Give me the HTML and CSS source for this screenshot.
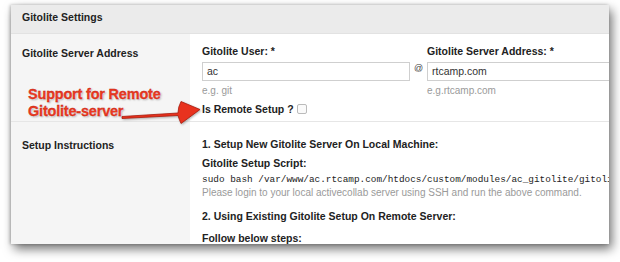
FILE: index.html
```html
<!DOCTYPE html>
<html>
<head>
<meta charset="utf-8">
<link rel="stylesheet" href="styles.css">
</head>
<body>
<div class="panel">
  <div class="panel-head">Gitolite Settings</div>
  <div class="row row-first">
    <div class="label">Gitolite Server Address</div>
    <div class="content">
      <div class="fields">
        <div class="field field-user">
          <div class="flabel">Gitolite User: *</div>
          <div class="input">ac</div>
          <div class="hint">e.g. git</div>
        </div>
        <div class="at">@</div>
        <div class="field field-server">
          <div class="flabel">Gitolite Server Address: *</div>
          <div class="input">rtcamp.com</div>
          <div class="hint">e.g.rtcamp.com</div>
        </div>
      </div>
      <div class="remote">Is Remote Setup ? <span class="checkbox"></span></div>
    </div>
  </div>
  <div class="row row-second">
    <div class="label">Setup Instructions</div>
    <div class="content">
      <div class="step">1. Setup New Gitolite Server On Local Machine:</div>
      <div class="sub">Gitolite Setup Script:</div>
      <div class="code">sudo bash /var/www/ac.rtcamp.com/htdocs/custom/modules/ac_gitolite/gitolite_setup.sh</div>
      <div class="note">Please login to your local activecollab server using SSH and run the above command.</div>
      <div class="step step2">2. Using Existing Gitolite Setup On Remote Server:</div>
      <div class="sub sub2">Follow below steps:</div>
    </div>
  </div>
</div>
<div class="callout">
  <div class="callout-text">Support for Remote<br>Gitolite-server</div>
  <svg class="arrow" width="90" height="30" viewBox="0 0 90 30">
    <path d="M2 16.5 L58 13 Q58 7 61 1.5 L80 9.5 L61 23.5 Q59 19 58 15.5 L2 18.5 Z" fill="#e8321e" stroke="#a8190b" stroke-width="0.8" stroke-linejoin="round"/>
  </svg>
</div>
</body>
</html>
```
FILE: styles.css
```css
html, body {
  margin: 0;
  padding: 0;
  background: #ffffff;
  width: 620px;
  height: 262px;
  overflow: hidden;
  font-family: "Liberation Sans", Arial, sans-serif;
  color: #222;
}
.panel {
  margin: 5px 0 0 11px;
  width: 598px;
  height: 239px;
  background: #fff;
  overflow: hidden;
  box-shadow: 3px 5px 10px rgba(0,0,0,0.55), -1px 0 3px rgba(0,0,0,0.25);
}
.panel-head {
  height: 28px;
  line-height: 25px;
  background: #ebebeb;
  border-bottom: 1px solid #e2e2e2;
  padding-left: 11px;
  font-size: 10.5px;
  font-weight: bold;
  color: #222;
}
.row {
  display: grid;
  grid-template-columns: 179px 1fr;
}
.row-first {
  height: 87px;
  border-bottom: 1px solid #e6e6e6;
}
.label {
  background: #f5f5f5;
  padding: 13px 0 0 11px;
  font-size: 10.5px;
  font-weight: bold;
  color: #222;
}
.row-second .label { padding-top: 17px; }
.content {
  padding: 10px 0 0 12px;
  white-space: nowrap;
  overflow: hidden;
  min-width: 0;
  font-size: 10.5px;
}
.row-second .content { padding-top: 15px; }
.fields {
  display: flex;
  align-items: flex-start;
}
.field-user { width: 208px; flex: none; }
.field-server { width: 200px; flex: none; }
.flabel {
  font-weight: bold;
  font-size: 10.5px;
  height: 18px;
  line-height: 14px;
}
.input {
  border: 1px solid #cfcfcf;
  box-sizing: border-box;
  height: 19px;
  line-height: 17px;
  padding-left: 4px;
  font-size: 10.5px;
  color: #333;
  background: #fff;
}
.hint {
  color: #9a9a9a;
  font-size: 10px;
  margin-top: 3px;
  line-height: 14px;
}
.at {
  flex: none;
  width: 17px;
  text-align: center;
  font-size: 9px;
  color: #444;
  padding-top: 19px;
}
.remote {
  margin-top: 5px;
  font-weight: bold;
  font-size: 10.5px;
  display: flex;
  align-items: center;
  gap: 3px;
}
.checkbox {
  display: inline-block;
  width: 8px;
  height: 8px;
  border: 1px solid #bbb;
  border-radius: 2px;
  background: #fafafa;
}
.step {
  font-weight: bold;
  line-height: 14px;
}
.sub {
  font-weight: bold;
  line-height: 14px;
  margin-top: 5px;
}
.code {
  font-family: "Liberation Mono", monospace;
  font-size: 9.4px;
  line-height: 13px;
  margin-top: 3px;
  color: #222;
}
.note {
  color: #9a9a9a;
  font-size: 10px;
  line-height: 13px;
}
.step2 { margin-top: 10px; }
.sub2 { margin-top: 8px; }
.callout {
  position: absolute;
  left: 28px;
  top: 86px;
}
.callout-text {
  font-weight: bold;
  font-size: 14.5px;
  line-height: 17px;
  color: #ec3a22;
  letter-spacing: -0.2px;
  text-shadow: 0 0 1px #fff, 0 0 2px #fff, 1px 1px 2px rgba(0,0,0,0.35);
  -webkit-text-stroke: 0.3px #c02010;
}
.arrow {
  position: absolute;
  left: 92px;
  top: 14px;
  overflow: visible;
  filter: drop-shadow(1px 1px 1px rgba(0,0,0,0.3));
}
```
